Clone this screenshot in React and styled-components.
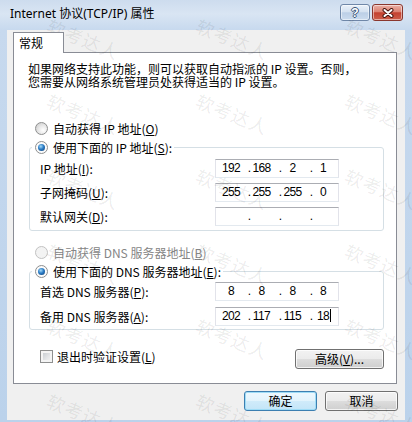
import React from 'react';
import styled, { createGlobalStyle } from 'styled-components';

const ui = `"Noto Sans CJK SC", "Noto Sans", sans-serif`;

const GlobalStyle = createGlobalStyle`
  html, body {
    margin: 0;
    padding: 0;
    background: #bcd3ec;
  }
  body {
    font-family: ${ui};
    font-size: 12px;
    color: #000;
  }
`;

// Window frame
const Window = styled.div`
  position: relative;
  width: 412px;
  height: 422px;
  overflow: hidden;
  display: flex;
  flex-direction: column;
  background: linear-gradient(180deg, #cddcee 0px, #d9e5f3 14px, #c7d9ee 30px, #bbd2eb 100%);
  font-family: ${ui};
  font-size: 12px;
`;

const TitleBar = styled.div`
  height: 30px;
  flex-shrink: 0;
  display: flex;
  align-items: flex-start;
  padding: 0 9px 0 10px;
`;

const Title = styled.div`
  flex: 1;
  margin-top: 6px;
  line-height: 16px;
  font-family: "Noto Sans", "Noto Sans CJK SC", sans-serif;
  font-size: 12px;
  color: #000;
  white-space: nowrap;
`;

const CaptionButtons = styled.div`
  display: flex;
  gap: 2px;
  margin-top: 4px;
`;

const CaptionButton = styled.div`
  width: ${p => (p.$close ? 31 : 30)}px;
  height: 17px;
  box-sizing: border-box;
  border: 1px solid ${p => (p.$close ? '#8a372e' : '#6f87a8')};
  border-radius: 3px;
  background: ${p =>
    p.$close
      ? 'linear-gradient(180deg, #eab0a6 0%, #dc8272 45%, #c4412f 52%, #cd5f4b 100%)'
      : 'linear-gradient(180deg, #eaf1f9 0%, #d5e2f1 45%, #bccfe6 52%, #cbdbee 100%)'};
  box-shadow: inset 0 0 0 1px rgba(255, 255, 255, 0.5);
  display: flex;
  align-items: center;
  justify-content: center;
`;

const HelpGlyph = styled.span`
  font-family: "Liberation Sans", Arial, sans-serif;
  font-weight: bold;
  font-size: 12px;
  line-height: 12px;
  color: #fff;
  text-shadow: 1px 0 0 #3b5578, -1px 0 0 #3b5578, 0 1px 0 #3b5578, 0 -1px 0 #3b5578;
`;

const Body = styled.div`
  flex: 1;
  margin: 0 7px 2px;
  background: #f0f0f0;
  display: flex;
  flex-direction: column;
  padding: 2px 8px 9px 6px;
`;

const Tabs = styled.div`
  display: flex;
  position: relative;
  z-index: 1;
  margin-bottom: -1px;
`;

const Tab = styled.div`
  width: 51px;
  height: 21px;
  box-sizing: border-box;
  border: 1px solid #898c95;
  border-bottom: none;
  background: #fff;
  padding: 0 0 1px 5px;
  display: flex;
  align-items: center;
`;

const Panel = styled.div`
  height: 332px;
  box-sizing: border-box;
  border: 1px solid #898c95;
  background: #fff;
  padding: 8px 12px 0 15px;
  display: flex;
  flex-direction: column;
`;

const Intro = styled.div`
  margin: 0 0 0 -1px;
  line-height: 13px;
  padding-top: 1px;
`;

const Line = styled.div`
  white-space: nowrap;
`;

const Key = styled.u`
  text-underline-offset: 1px;
`;

const RadioRow = styled.div`
  height: 19px;
  display: flex;
  align-items: center;
  gap: 5px;
  padding-left: ${p => (p.$legend ? 0 : 6)}px;
  margin-top: ${p => p.$top || 0}px;
  color: ${p => (p.$disabled ? '#858585' : '#000')};
  white-space: nowrap;
`;

const RadioCircle = styled.span`
  width: 13px;
  height: 13px;
  box-sizing: border-box;
  border-radius: 50%;
  flex-shrink: 0;
  border: 1px solid ${p => (p.$disabled ? '#c2c2c2' : '#8e8f8f')};
  background: ${p =>
    p.$disabled
      ? '#f3f3f3'
      : p.$checked
      ? '#fbfbfb'
      : 'radial-gradient(circle at 65% 65%, #ffffff 0%, #e8e8e8 45%, #c6c6c6 100%)'};
  display: flex;
  align-items: center;
  justify-content: center;
`;

const RadioDot = styled.span`
  width: 7px;
  height: 7px;
  border-radius: 50%;
  background: radial-gradient(circle at 40% 35%, #a6dbf7 0%, #2b7cc6 45%, #0d3a6d 100%);
`;

const Group = styled.fieldset`
  margin: 0;
  padding: 0;
  min-width: 0;
  border: 1px solid #d5dfe5;
  border-radius: 3px;
`;

const Legend = styled.legend`
  margin-left: 2px;
  padding: 0 2px 0 3px;
`;

const GroupBody = styled.div`
  display: flex;
  flex-direction: column;
  gap: ${p => p.$gap}px;
  padding: ${p => p.$pt}px 0 ${p => p.$pb}px 10px;
`;

const FieldRow = styled.div`
  display: grid;
  grid-template-columns: 175px 124px;
  align-items: center;
  height: 19px;
  white-space: nowrap;
`;

const IpBox = styled.div`
  width: 124px;
  height: 19px;
  box-sizing: border-box;
  border: 1px solid #e2e3ea;
  border-top-color: #abadb3;
  border-bottom-color: #e3e9ef;
  background: #fff;
  display: grid;
  grid-template-columns: 30px 6px 25px 6px 25px 6px 24px;
  align-items: center;
  font-family: "Liberation Sans", Arial, sans-serif;
  font-size: 12px;
  letter-spacing: -0.6px;
  line-height: 15px;
`;

const Octet = styled.span`
  text-align: center;
  padding-right: ${p => (p.$first ? 0 : 6)}px;
  white-space: nowrap;
`;

const Dot = styled.span`
  text-align: center;
`;

const Caret = styled.span`
  display: inline-block;
  width: 1px;
  height: 13px;
  background: #000;
  vertical-align: middle;
  margin: -2px -2px 0 1px;
`;

const BottomRow = styled.div`
  display: flex;
  justify-content: space-between;
  align-items: flex-start;
  margin-top: 19px;
`;

const CheckRow = styled.div`
  display: flex;
  align-items: center;
  gap: 4px;
  height: 14px;
  padding-left: 11px;
  white-space: nowrap;
`;

const Checkbox = styled.span`
  width: 13px;
  height: 13px;
  box-sizing: border-box;
  border: 1px solid #8e8f8f;
  background: linear-gradient(135deg, #bfc4ca 0%, #e4e6e8 60%, #f6f6f6 100%);
  box-shadow: inset 0 0 0 2px #f4f4f4;
`;

const Button = styled.button`
  width: ${p => p.$w}px;
  height: 20px;
  box-sizing: border-box;
  padding: 0;
  margin: 0;
  border: 1px solid ${p => (p.$primary ? '#3c7fb1' : '#707070')};
  border-radius: 3px;
  background: ${p =>
    p.$primary
      ? 'linear-gradient(180deg, #eef8fe 0%, #e2f3fc 50%, #d0ebfa 51%, #c3e5f8 100%)'
      : 'linear-gradient(180deg, #f2f2f2 0%, #ebebeb 50%, #dddddd 51%, #cfcfcf 100%)'};
  box-shadow: inset 0 0 0 1px ${p => (p.$primary ? '#9fdcf6' : 'rgba(255,255,255,0.75)')};
  font-family: ${ui};
  font-size: 12px;
  color: #000;
  line-height: 16px;
`;

const DialogButtons = styled.div`
  display: flex;
  justify-content: flex-end;
  gap: 8px;
  margin: 7px -1px 0 0;
`;

// faint "软考达人" watermark tiled over the whole shot
const Watermark = styled.div`
  position: absolute;
  inset: 0;
  pointer-events: none;
  overflow: hidden;
  display: grid;
  grid-template-columns: repeat(3, 149px);
  grid-auto-rows: 75px;
  padding: 12px 0 0 38px;
`;

const Mark = styled.div`
  font-family: "Noto Sans CJK SC", sans-serif;
  font-size: 18px;
  line-height: 20px;
  letter-spacing: 1px;
  color: rgba(0, 0, 0, 0.085);
  white-space: nowrap;
  transform: rotate(22deg);
  transform-origin: 0 50%;
`;

const Radio = ({ checked, disabled, legend, top, children }) => (
  <RadioRow $legend={legend} $top={top} $disabled={disabled}>
    <RadioCircle $checked={checked} $disabled={disabled}>
      {checked && <RadioDot />}
    </RadioCircle>
    <span>{children}</span>
  </RadioRow>
);

const IpField = ({ parts = ['', '', '', ''], caret }) => (
  <IpBox>
    <Octet $first>{parts[0]}</Octet>
    <Dot>.</Dot>
    <Octet>{parts[1]}</Octet>
    <Dot>.</Dot>
    <Octet>{parts[2]}</Octet>
    <Dot>.</Dot>
    <Octet>
      {parts[3]}
      {caret && <Caret />}
    </Octet>
  </IpBox>
);

export default function App() {
  return (
    <>
      <GlobalStyle />
      <Window>
        <TitleBar>
          <Title>Internet 协议(TCP/IP) 属性</Title>
          <CaptionButtons>
            <CaptionButton>
              <HelpGlyph>?</HelpGlyph>
            </CaptionButton>
            <CaptionButton $close>
              <svg width="12" height="10" viewBox="0 0 12 10">
                <path d="M2.5 2 L9.5 8 M9.5 2 L2.5 8" stroke="#4a1610" strokeWidth="4" strokeLinecap="round" />
                <path d="M2.5 2 L9.5 8 M9.5 2 L2.5 8" stroke="#fff" strokeWidth="2" strokeLinecap="round" />
              </svg>
            </CaptionButton>
          </CaptionButtons>
        </TitleBar>

        <Body>
          <Tabs>
            <Tab>常规</Tab>
          </Tabs>
          <Panel>
            <Intro>
              <Line>如果网络支持此功能，则可以获取自动指派的 IP 设置。否则，</Line>
              <Line>您需要从网络系统管理员处获得适当的 IP 设置。</Line>
            </Intro>

            <Radio top={31}>
              自动获得 IP 地址(<Key>O</Key>)
            </Radio>
            <Group>
              <Legend>
                <Radio checked legend>
                  使用下面的 IP 地址(<Key>S</Key>):
                </Radio>
              </Legend>
              <GroupBody $gap={5} $pt={2} $pb={4}>
                <FieldRow>
                  <span>IP 地址(<Key>I</Key>):</span>
                  <IpField parts={['192', '168', '2', '1']} />
                </FieldRow>
                <FieldRow>
                  <span>子网掩码(<Key>U</Key>):</span>
                  <IpField parts={['255', '255', '255', '0']} />
                </FieldRow>
                <FieldRow>
                  <span>默认网关(<Key>D</Key>):</span>
                  <IpField />
                </FieldRow>
              </GroupBody>
            </Group>

            <Radio disabled top={12}>
              自动获得 DNS 服务器地址(<Key>B</Key>)
            </Radio>
            <Group>
              <Legend>
                <Radio checked legend>
                  使用下面的 DNS 服务器地址(<Key>E</Key>):
                </Radio>
              </Legend>
              <GroupBody $gap={6} $pt={1} $pb={3}>
                <FieldRow>
                  <span>首选 DNS 服务器(<Key>P</Key>):</span>
                  <IpField parts={['8', '8', '8', '8']} />
                </FieldRow>
                <FieldRow>
                  <span>备用 DNS 服务器(<Key>A</Key>):</span>
                  <IpField parts={['202', '117', '115', '18']} caret />
                </FieldRow>
              </GroupBody>
            </Group>

            <BottomRow>
              <CheckRow>
                <Checkbox />
                <span>退出时验证设置(<Key>L</Key>)</span>
              </CheckRow>
              <Button $w={89}>
                高级(<Key>V</Key>)...
              </Button>
            </BottomRow>
          </Panel>

          <DialogButtons>
            <Button $w={73} $primary>确定</Button>
            <Button $w={73}>取消</Button>
          </DialogButtons>
        </Body>

        <Watermark>
          {Array.from({ length: 18 }).map((_, i) => (
            <Mark key={i}>软考达人</Mark>
          ))}
        </Watermark>
      </Window>
    </>
  );
}
